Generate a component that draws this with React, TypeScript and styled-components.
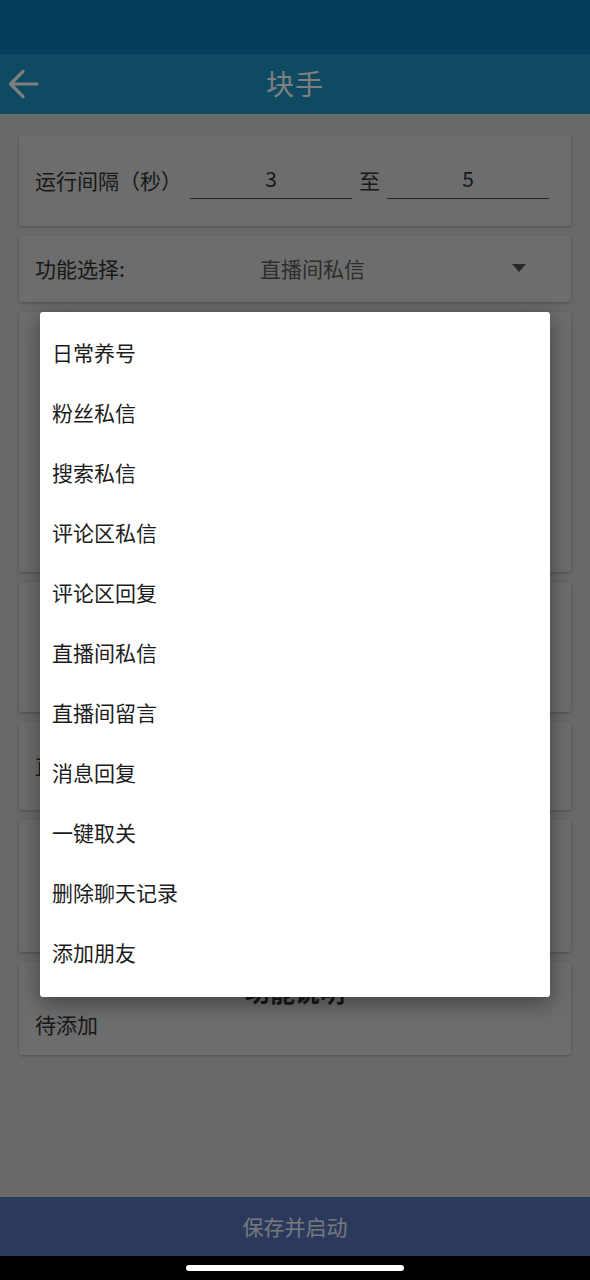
import * as React from "react";
import styled, { createGlobalStyle } from "styled-components";

const functions = [
  "日常养号",
  "粉丝私信",
  "搜索私信",
  "评论区私信",
  "评论区回复",
  "直播间私信",
  "直播间留言",
  "消息回复",
  "一键取关",
  "删除聊天记录",
  "添加朋友",
];

const GlobalStyle = createGlobalStyle`
  html, body {
    margin: 0;
    padding: 0;
    background: #000;
  }
  body {
    font-family: "Noto Sans CJK SC", "Noto Sans", sans-serif;
  }
`;

const Screen = styled.div`
  width: 590px;
  height: 1280px;
  display: flex;
  flex-direction: column;
  overflow: hidden;
`;

const AppFrame = styled.div`
  position: relative;
  flex: 1;
  display: flex;
  flex-direction: column;
  background: #d2d2d2;
`;

const StatusBar = styled.div`
  height: 54px;
  background: #0a7ab8;
`;

const Toolbar = styled.div`
  height: 60px;
  display: grid;
  grid-template-columns: 46px 1fr 46px;
  align-items: center;
  background: #1c94c4;
`;

const BackButton = styled.div`
  display: flex;
  align-items: center;
  justify-content: center;
  height: 100%;
`;

const Title = styled.div`
  text-align: center;
  font-size: 28px;
  line-height: 34px;
  margin-top: -2px;
  color: #ffffff;
  letter-spacing: 1px;
`;

const Content = styled.div`
  flex: 1;
  display: flex;
  flex-direction: column;
  gap: 10px;
  padding: 21px 19px 0;
`;

const Card = styled.div<{ $h?: number }>`
  height: ${(p) => (p.$h ? `${p.$h}px` : "auto")};
  box-sizing: border-box;
  background: #dadada;
  border-radius: 3px;
  box-shadow: 0 1px 3px rgba(0, 0, 0, 0.25);
  padding: 0 22px 2px 16px;
  display: flex;
  align-items: center;
  color: #323232;
  font-size: 21px;
`;

const Label = styled.span<{ $w?: number }>`
  flex: none;
  width: ${(p) => (p.$w ? `${p.$w}px` : "auto")};
  margin-right: 8px;
  white-space: nowrap;
`;

const NumberField = styled.div`
  width: 162px;
  height: 36px;
  margin-top: 2px;
  box-sizing: border-box;
  border-bottom: 1.5px solid #464646;
  text-align: center;
  line-height: 31px;
`;

const Sep = styled.span`
  margin: 0 7px;
`;

const SelectValue = styled.span`
  flex: 1;
  color: #5a5a5a;
`;

const Caret = styled.span`
  width: 0;
  height: 0;
  margin-right: 23px;
  border-left: 7px solid transparent;
  border-right: 7px solid transparent;
  border-top: 8px solid #505050;
`;

const InfoCard = styled.div`
  box-sizing: border-box;
  height: 93px;
  background: #dadada;
  border-radius: 3px;
  box-shadow: 0 1px 3px rgba(0, 0, 0, 0.25);
  padding: 13px 16px 0;
  color: #323232;
`;

const SectionTitle = styled.div`
  text-align: center;
  font-size: 25px;
  font-weight: 700;
  line-height: 32px;
  margin-bottom: 2px;
`;

const Note = styled.div`
  font-size: 21px;
  line-height: 30px;
`;

const SaveButton = styled.div`
  height: 59px;
  display: flex;
  align-items: center;
  justify-content: center;
  padding-bottom: 2px;
  box-sizing: border-box;
  background: #5674b8;
  color: #eef2fa;
  font-size: 21px;
`;

const Scrim = styled.div`
  position: absolute;
  inset: 0;
  background: rgba(0, 0, 0, 0.5);
`;

const Menu = styled.div`
  position: absolute;
  top: 312px;
  left: 40px;
  width: 510px;
  padding: 10px 0 15px;
  background: #ffffff;
  border-radius: 3px;
  box-shadow: 0 6px 22px rgba(0, 0, 0, 0.4);
`;

const MenuItem = styled.div`
  height: 60px;
  display: flex;
  align-items: center;
  padding-left: 12px;
  font-size: 21px;
  color: #1c1c1c;
`;

const NavBar = styled.div`
  height: 24px;
  background: #000;
  display: flex;
  justify-content: center;
`;

const HomeBar = styled.div`
  width: 218px;
  height: 6px;
  margin-top: 9px;
  border-radius: 3px;
  background: #ffffff;
`;

const BackArrow = () => (
  <svg width="32" height="30" viewBox="0 0 32 30" fill="none">
    <path
      d="M30 15H4M16 2.5L3.5 15 16 27.5"
      stroke="#ffffff"
      strokeWidth="3.2"
      strokeLinecap="round"
      strokeLinejoin="round"
    />
  </svg>
);

export default function App() {
  return (
    <Screen>
      <GlobalStyle />
      <AppFrame>
        <StatusBar />
        <Toolbar>
          <BackButton>
            <BackArrow />
          </BackButton>
          <Title>块手</Title>
          <span />
        </Toolbar>
        <Content>
          <Card $h={91}>
            <Label>运行间隔（秒）</Label>
            <NumberField>3</NumberField>
            <Sep>至</Sep>
            <NumberField>5</NumberField>
          </Card>
          <Card $h={66}>
            <Label $w={217}>功能选择:</Label>
            <SelectValue>直播间私信</SelectValue>
            <Caret />
          </Card>
          <Card $h={260} />
          <Card $h={130} />
          <Card $h={88}>
            <Label>直播间:</Label>
          </Card>
          <Card $h={132} />
          <InfoCard>
            <SectionTitle>功能说明</SectionTitle>
            <Note>待添加</Note>
          </InfoCard>
        </Content>
        <SaveButton>保存并启动</SaveButton>
        <Scrim />
        <Menu>
          {functions.map((name) => (
            <MenuItem key={name}>{name}</MenuItem>
          ))}
        </Menu>
      </AppFrame>
      <NavBar>
        <HomeBar />
      </NavBar>
    </Screen>
  );
}
